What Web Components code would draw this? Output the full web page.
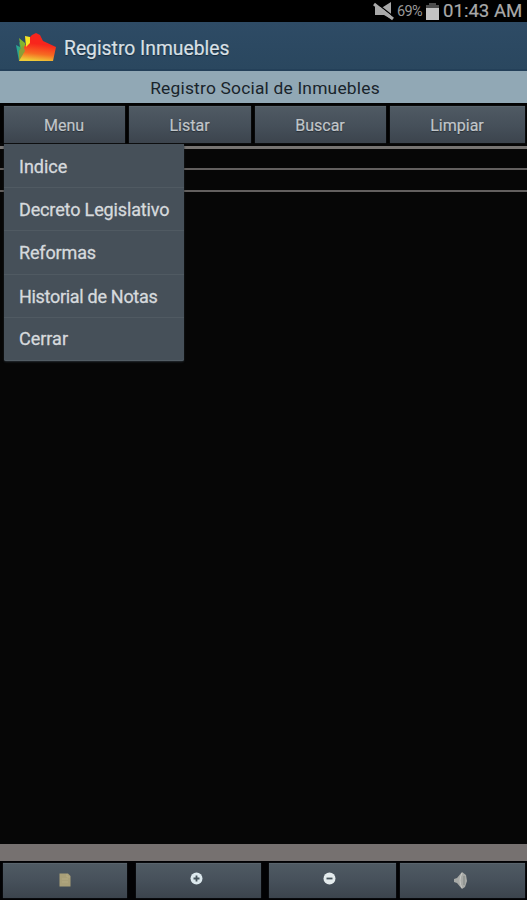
<!DOCTYPE html>
<html lang="es">
<head>
<meta charset="utf-8">
<title>Registro Inmuebles</title>
<style>
html,body{margin:0;height:100%;background:#060606;overflow:hidden}
body{font-family:Roboto,sans-serif}
</style>
</head>
<body>
<registro-app></registro-app>
<script>
const define = (name, html) => {
  const t = document.createElement('template');
  t.innerHTML = html;
  customElements.define(name, class extends HTMLElement {
    constructor() {
      super();
      this.attachShadow({mode: 'open'}).appendChild(t.content.cloneNode(true));
    }
  });
};

define('status-bar', `
<style>
:host{display:flex;height:22px;background:#000;color:#a9a9a9;justify-content:flex-end;align-items:center;box-sizing:border-box;padding-right:4px;white-space:nowrap}
svg{display:block;flex:none}
.pct{font-size:14.500px;letter-spacing:-.7px;width:29px;margin-left:2px;color:#999;line-height:22px;padding-top:1px}
.time{font-size:18.6px;line-height:22px;width:80px;margin-left:4px;-webkit-text-stroke:.2px #a9a9a9}
</style>
<svg width="22" height="20" viewBox="0 0 22 20"><path d="M2 6h8l8-5v17l-7-4H2z" fill="#a8a8a8"/><path d="M2 1 21 16" stroke="#000" stroke-width="1.500"/><path d="M1 3 20 18" stroke="#aaa" stroke-width="3"/></svg>
<span class="pct">69%</span>
<svg width="13" height="18" viewBox="0 0 13 18"><path d="M3 1h7v2h3v4H0V3h3z" fill="#4c4c4c"/><path d="M0 6h13v12H0z" fill="#c3c3c3"/></svg>
<span class="time">01:43 AM</span>`);

define('app-header', `
<style>
:host{display:flex;height:49px;box-sizing:border-box;background:linear-gradient(#2e4b65,#2a475f);border-bottom:2px solid #244059;align-items:center;padding-left:15px;color:#d9e0e6;font-size:19.300px;white-space:nowrap}
svg{flex:none;margin:3px 7px 0 0}
span{padding-top:6px;text-shadow:0 1px 1px #172838;-webkit-text-stroke:.2px #d9e0e6}
</style>
<svg width="42" height="32" viewBox="0 0 42 32">
<defs><linearGradient id="r" x1="0.65" y1="0" x2="0.5" y2="1"><stop offset=".4" stop-color="#f8251c"/><stop offset=".75" stop-color="#f76a22"/><stop offset="1" stop-color="#efcb38"/></linearGradient>
<linearGradient id="g" x1="0" y1="0" x2="1" y2="0"><stop offset="0" stop-color="#20a7a4"/><stop offset="1" stop-color="#56a536"/></linearGradient></defs>
<path d="M1 14l4 2-1-5 4 3 2 13-6 3z" fill="url(#g)"/><path d="M4 7l6 5v8l-4-2z" fill="#86b52d"/>
<path d="M4 30V22L9 16 12 12 14 7 17 4 21 2 25 4 28 10 41 16 38 30Z" fill="url(#r)"/><path d="M4 30V20L8 14 10 20Z" fill="#8b9f37"/><path d="M10 5l5 1v6l-4 4z" fill="#f7e525"/>
</svg><span><slot></slot></span>`);

define('page-title', `
<style>
:host{display:flex;height:32px;background:#91a8b5;color:#19242b;align-items:center;justify-content:center;font-size:17.400px;box-sizing:border-box;padding:2px 0 0 3px;white-space:nowrap;letter-spacing:.2px}
</style><slot></slot>`);

define('tool-button', `
<style>
:host{display:flex;box-sizing:border-box;align-items:center;justify-content:center;background:linear-gradient(#4f5a63,#454f59 55%,#3c444d);border-top:1px solid #59646c;box-shadow:0 0 1px #30363c;color:#c1c6ca;font-size:16px;white-space:nowrap;padding-right:1px;text-shadow:0 1px 1px #272d33;-webkit-text-stroke:.2px #c1c6ca}
</style><slot></slot>`);

define('menu-item', `
<style>
:host{display:flex;height:43.200px;box-sizing:border-box;align-items:center;padding:1px 0 0 15px;color:#d6dadd;font-size:18px;letter-spacing:-.14px;white-space:nowrap;border-bottom:1px solid #505a62;-webkit-text-stroke:.3px #d6dadd}
:host(:nth-child(4)){letter-spacing:-.3px}
:host(:last-child){border-bottom:0;letter-spacing:0;padding-bottom:2px}
:host(:first-child){letter-spacing:0}
</style><slot></slot>`);

define('drop-menu', `
<style>
:host{display:block;position:absolute;left:4px;top:144px;width:180px;height:217px;box-sizing:border-box;padding-top:1px;background:#465059;border-radius:0 0 2px 2px;box-shadow:0 1px 2px #252b30,inset 0 -1px #525c64}
</style><slot></slot>`);

define('list-rules', `
<style>
:host{display:block;height:701px;box-sizing:border-box;padding-top:3px;background:#060606}
i{display:block;height:2px;background:#625f5e;margin-bottom:20px}
i:first-of-type{height:3px;background:#777472;margin-bottom:19px}
</style><i></i><i></i><i></i>`);

define('registro-app', `
<style>
:host{display:block;width:527px;height:900px;position:relative;overflow:hidden;background:#060606}
.top{display:grid;grid-template-columns:121px 122px 131px 135px;column-gap:4px;height:37px;padding:3px 2px 0 4px;background:#020202}
.bar{height:17px;background:#767170}
.bottom{display:grid;grid-template-columns:124px 9px 125px 8px 127px 4px 125px;height:35px;padding:2px 2px 2px 3px;background:#020204}
svg{display:block}
</style>
<status-bar></status-bar>
<app-header>Registro Inmuebles</app-header>
<page-title>Registro Social de Inmuebles</page-title>
<div class="top"><tool-button>Menu</tool-button><tool-button>Listar</tool-button><tool-button>Buscar</tool-button><tool-button>Limpiar</tool-button></div>
<list-rules></list-rules>
<div class="bar"></div>
<div class="bottom">
<tool-button><svg width="12" height="16" viewBox="0 0 12 16"><path d="M.5.500H9L11.500 3V13.500H.5Z" fill="#a99f78"/><path d="M8 1v3h3M3 6h6M3 9h6" fill="none" stroke="#b8ad85" stroke-width=".8"/></svg></tool-button><span></span>
<tool-button><svg width="17" height="18" viewBox="0 0 17 18"><circle cx="6.500" cy="6.500" r="6" fill="#dce8ed"/><path d="M6.500 3.500v6M3.500 6.500h6" stroke="#46545c" stroke-width="1.800"/></svg></tool-button><span></span>
<tool-button><svg width="18" height="18" viewBox="0 0 18 18"><circle cx="6.500" cy="6.500" r="6" fill="#e4ebed"/><path d="M3.500 6.500h6" stroke="#46545c" stroke-width="1.800"/></svg></tool-button><span></span>
<tool-button><svg width="19" height="18" viewBox="0 0 19 18"><path d="M1 7l3-1 5-6 4 3 1 6-2 6-3 2-5-6-3-1z" fill="#a8aaa7"/><path d="M9 1Q5 9 9 16" fill="none" stroke="#c8c9c5" stroke-width="1"/><path d="M11 4v9" stroke="#8d918e" stroke-width="1.500"/></svg></tool-button>
</div>
<drop-menu><menu-item>Indice</menu-item><menu-item>Decreto Legislativo</menu-item><menu-item>Reformas</menu-item><menu-item>Historial de Notas</menu-item><menu-item>Cerrar</menu-item></drop-menu>`);
</script>
</body>
</html>
